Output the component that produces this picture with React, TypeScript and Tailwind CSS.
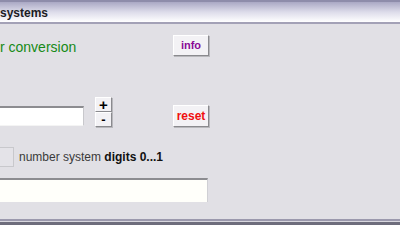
import React from 'react';

const sans = { fontFamily: '"Liberation Sans", Arial, sans-serif' };

function RaisedButton({ label, color, className }: { label: string; color: string; className?: string }) {
  return (
    <button
      className={`flex items-center justify-center bg-[#f3f2f5] border border-t-[#ffffff] border-l-[#ffffff] border-r-[#8a8a8e] border-b-[#8a8a8e] shadow-[1px_1px_0_#b8b8bc] font-bold ${color} ${className ?? ''}`}
    >
      {label}
    </button>
  );
}

export default function App() {
  return (
    <div className="w-[400px] h-[225px] overflow-hidden flex flex-col bg-[#e1e0e5] text-[#222]" style={sans}>
      {/* title bar */}
      <div className="h-[24px] shrink-0 border-t-2 border-t-[#8e8caa] border-b-2 border-b-[#a3a1b6] bg-gradient-to-b from-[#aaa8c4] via-[#dddcea] to-[#ffffff] flex items-center">
        <span className="text-[12px] font-bold leading-none text-[#1c1c24] mt-[1px]">systems</span>
      </div>

      <div className="flex-1 flex flex-col">
        {/* heading row */}
        <div className="mt-[11px] w-[209px] h-[21px] flex items-center justify-between">
          <span className="text-[14px] leading-none text-[#168a16] mt-[2px]">r conversion</span>
          <RaisedButton label="info" color="text-[#8a0a96]" className="w-[36px] h-[21px] text-[11px]" />
        </div>

        {/* input row */}
        <div className="mt-[41px] w-[209px] flex items-start">
          <div className="mt-[9px] w-[84px] h-[20px] bg-white border-t-2 border-t-[#8c8c90] border-r border-r-[#c8c8cc] border-b border-b-[#f4f4f4]" />
          <div className="ml-[11px] flex flex-col w-[17px]">
            <RaisedButton label="+" color="text-black" className="h-[15px] text-[15px] leading-none" />
            <RaisedButton label="-" color="text-black" className="h-[15px] text-[13px] leading-none" />
          </div>
          <RaisedButton label="reset" color="text-[#f01010]" className="ml-auto mt-[8px] w-[36px] h-[22px] text-[12px]" />
        </div>

        {/* number system row */}
        <div className="mt-[20px] flex items-center">
          <div className="w-[14px] h-[20px] border border-l-0 border-[#c8c8cc] bg-[#e4e3e8]" />
          <span className="ml-[5px] text-[12px] text-[#3a3a3a]">
            number system <span className="font-bold text-[#111]">digits 0...1</span>
          </span>
        </div>

        {/* output row */}
        <div className="mt-[11px] w-[208px] h-[24px] bg-[#fffffa] border-t-2 border-t-[#8c8c90] border-r border-r-[#d0d0d4]" />
      </div>

      {/* bottom edge */}
      <div className="h-[6px] shrink-0 flex flex-col">
        <div className="h-[2px] bg-[#9b99ad]" />
        <div className="h-[1px] bg-[#d8d7de]" />
        <div className="h-[3px] bg-[#6e6d7c]" />
      </div>
    </div>
  );
}
